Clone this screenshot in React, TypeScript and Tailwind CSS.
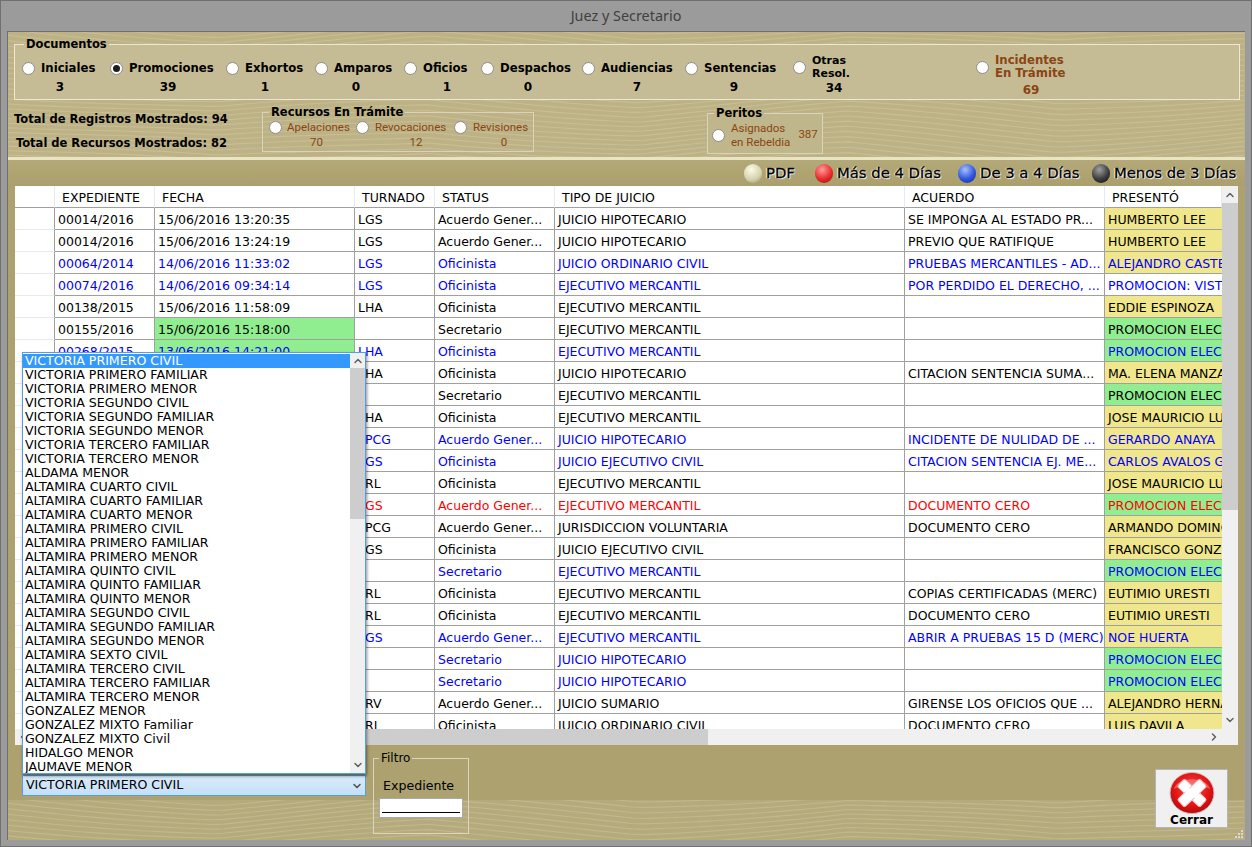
import { ChevronDown, ChevronLeft, ChevronRight, ChevronUp } from "lucide-react";

type Tone = "black" | "blue" | "red";

type GridRow = {
  exp: string;
  fecha: string;
  turnado: string;
  status: string;
  tipo: string;
  acuerdo: string;
  presento: string;
  tone: Tone;
  fechaVerde?: boolean;
  presentoBg?: "yellow" | "green" | "white";
};

const rows: GridRow[] = [
  { exp: "00014/2016", fecha: "15/06/2016 13:20:35", turnado: "LGS", status: "Acuerdo Gener...", tipo: "JUICIO HIPOTECARIO", acuerdo: "SE IMPONGA AL ESTADO PR...", presento: "HUMBERTO LEE", tone: "black" },
  { exp: "00014/2016", fecha: "15/06/2016 13:24:19", turnado: "LGS", status: "Acuerdo Gener...", tipo: "JUICIO HIPOTECARIO", acuerdo: "PREVIO QUE RATIFIQUE", presento: "HUMBERTO LEE", tone: "black" },
  { exp: "00064/2014", fecha: "14/06/2016 11:33:02", turnado: "LGS", status: "Oficinista", tipo: "JUICIO ORDINARIO CIVIL", acuerdo: "PRUEBAS MERCANTILES - AD...", presento: "ALEJANDRO CASTE", tone: "blue" },
  { exp: "00074/2016", fecha: "14/06/2016 09:34:14", turnado: "LGS", status: "Oficinista", tipo: "EJECUTIVO MERCANTIL", acuerdo: "POR PERDIDO EL DERECHO, ...", presento: "PROMOCION: VIST", tone: "blue", presentoBg: "white" },
  { exp: "00138/2015", fecha: "15/06/2016 11:58:09", turnado: "LHA", status: "Oficinista", tipo: "EJECUTIVO MERCANTIL", acuerdo: "", presento: "EDDIE ESPINOZA", tone: "black" },
  { exp: "00155/2016", fecha: "15/06/2016 15:18:00", turnado: "", status: "Secretario", tipo: "EJECUTIVO MERCANTIL", acuerdo: "", presento: "PROMOCION ELEC", tone: "black", fechaVerde: true, presentoBg: "green" },
  { exp: "00268/2015", fecha: "13/06/2016 14:21:00", turnado: "LHA", status: "Oficinista", tipo: "EJECUTIVO MERCANTIL", acuerdo: "", presento: "PROMOCION ELEC", tone: "blue", fechaVerde: true, presentoBg: "green" },
  { exp: "", fecha: "", turnado: "LHA", status: "Oficinista", tipo: "JUICIO HIPOTECARIO", acuerdo: "CITACION SENTENCIA SUMA...", presento: "MA. ELENA MANZA", tone: "black" },
  { exp: "", fecha: "", turnado: "", status: "Secretario", tipo: "EJECUTIVO MERCANTIL", acuerdo: "", presento: "PROMOCION ELEC", tone: "black", presentoBg: "green" },
  { exp: "", fecha: "", turnado: "LHA", status: "Oficinista", tipo: "EJECUTIVO MERCANTIL", acuerdo: "", presento: "JOSE MAURICIO LU", tone: "black" },
  { exp: "", fecha: "", turnado: "LPCG", status: "Acuerdo Gener...", tipo: "JUICIO HIPOTECARIO", acuerdo: "INCIDENTE DE NULIDAD DE ...", presento: "GERARDO ANAYA", tone: "blue" },
  { exp: "", fecha: "", turnado: "LGS", status: "Oficinista", tipo: "JUICIO EJECUTIVO CIVIL", acuerdo: "CITACION SENTENCIA EJ. ME...", presento: "CARLOS AVALOS G", tone: "blue" },
  { exp: "", fecha: "", turnado: "LRL", status: "Oficinista", tipo: "EJECUTIVO MERCANTIL", acuerdo: "", presento: "JOSE MAURICIO LU", tone: "black" },
  { exp: "", fecha: "", turnado: "LGS", status: "Acuerdo Gener...", tipo: "EJECUTIVO MERCANTIL", acuerdo: "DOCUMENTO CERO", presento: "PROMOCION ELEC", tone: "red", presentoBg: "green" },
  { exp: "", fecha: "", turnado: "LPCG", status: "Acuerdo Gener...", tipo: "JURISDICCION VOLUNTARIA", acuerdo: "DOCUMENTO CERO", presento: "ARMANDO DOMING", tone: "black" },
  { exp: "", fecha: "", turnado: "LGS", status: "Oficinista", tipo: "JUICIO EJECUTIVO CIVIL", acuerdo: "", presento: "FRANCISCO GONZ", tone: "black" },
  { exp: "", fecha: "", turnado: "", status: "Secretario", tipo: "EJECUTIVO MERCANTIL", acuerdo: "", presento: "PROMOCION ELEC", tone: "blue", presentoBg: "green" },
  { exp: "", fecha: "", turnado: "LRL", status: "Oficinista", tipo: "EJECUTIVO MERCANTIL", acuerdo: "COPIAS CERTIFICADAS (MERC)", presento: "EUTIMIO URESTI", tone: "black" },
  { exp: "", fecha: "", turnado: "LRL", status: "Oficinista", tipo: "EJECUTIVO MERCANTIL", acuerdo: "DOCUMENTO CERO", presento: "EUTIMIO URESTI", tone: "black" },
  { exp: "", fecha: "", turnado: "LGS", status: "Acuerdo Gener...", tipo: "EJECUTIVO MERCANTIL", acuerdo: "ABRIR A PRUEBAS 15 D (MERC)", presento: "NOE HUERTA", tone: "blue" },
  { exp: "", fecha: "", turnado: "", status: "Secretario", tipo: "JUICIO HIPOTECARIO", acuerdo: "", presento: "PROMOCION ELEC", tone: "blue", presentoBg: "green" },
  { exp: "", fecha: "", turnado: "", status: "Secretario", tipo: "JUICIO HIPOTECARIO", acuerdo: "", presento: "PROMOCION ELEC", tone: "blue", presentoBg: "green" },
  { exp: "", fecha: "", turnado: "LRV", status: "Acuerdo Gener...", tipo: "JUICIO SUMARIO", acuerdo: "GIRENSE LOS OFICIOS QUE ...", presento: "ALEJANDRO HERNA", tone: "black" },
  { exp: "", fecha: "", turnado: "LRL", status: "Oficinista", tipo: "JUICIO ORDINARIO CIVIL", acuerdo: "DOCUMENTO CERO", presento: "LUIS DAVILA", tone: "black" },
];

const juzgados = [
  "VICTORIA PRIMERO CIVIL",
  "VICTORIA PRIMERO FAMILIAR",
  "VICTORIA PRIMERO MENOR",
  "VICTORIA SEGUNDO CIVIL",
  "VICTORIA SEGUNDO FAMILIAR",
  "VICTORIA SEGUNDO MENOR",
  "VICTORIA TERCERO FAMILIAR",
  "VICTORIA TERCERO MENOR",
  "ALDAMA MENOR",
  "ALTAMIRA CUARTO CIVIL",
  "ALTAMIRA CUARTO FAMILIAR",
  "ALTAMIRA CUARTO MENOR",
  "ALTAMIRA PRIMERO CIVIL",
  "ALTAMIRA PRIMERO FAMILIAR",
  "ALTAMIRA PRIMERO MENOR",
  "ALTAMIRA QUINTO CIVIL",
  "ALTAMIRA QUINTO FAMILIAR",
  "ALTAMIRA QUINTO MENOR",
  "ALTAMIRA SEGUNDO CIVIL",
  "ALTAMIRA SEGUNDO FAMILIAR",
  "ALTAMIRA SEGUNDO MENOR",
  "ALTAMIRA SEXTO CIVIL",
  "ALTAMIRA TERCERO CIVIL",
  "ALTAMIRA TERCERO FAMILIAR",
  "ALTAMIRA TERCERO MENOR",
  "GONZALEZ MENOR",
  "GONZALEZ MIXTO Familiar",
  "GONZALEZ MIXTO Civil",
  "HIDALGO MENOR",
  "JAUMAVE MENOR",
];

const documentos = [
  { label: "Iniciales", count: "3", itemClass: "w-[88px]", countClass: "w-[76px]", selected: false },
  { label: "Promociones", count: "39", itemClass: "w-[116px]", countClass: "w-[116px]", selected: true },
  { label: "Exhortos", count: "1", itemClass: "w-[89px]", countClass: "w-[78px]", selected: false },
  { label: "Amparos", count: "0", itemClass: "w-[89px]", countClass: "w-[82px]", selected: false },
  { label: "Oficios", count: "1", itemClass: "w-[77px]", countClass: "w-[86px]", selected: false },
  { label: "Despachos", count: "0", itemClass: "w-[101px]", countClass: "w-[94px]", selected: false },
  { label: "Audiencias", count: "7", itemClass: "w-[103px]", countClass: "w-[110px]", selected: false },
  { label: "Sentencias", count: "9", itemClass: "w-[108px]", countClass: "w-[98px]", selected: false },
];

function toneClass(tone: Tone) {
  if (tone === "blue") return "text-[#0000ff]";
  if (tone === "red") return "text-[#ff0000]";
  return "text-[#000000]";
}

function presentoClass(bg: GridRow["presentoBg"]) {
  if (bg === "green") return "bg-[#90ee90]";
  if (bg === "white") return "bg-white";
  return "bg-[#f0e68c]";
}

// fondo ondulado del formulario
function Waves({ width, height }: { width: number; height: number }) {
  const lines: string[] = [];
  for (let y0 = -12; y0 < height + 16; y0 += 5) {
    let d = "";
    for (let x = 0; x <= width; x += 12) {
      const phase = ((x % 420) / 420) * 2;
      const tri = phase < 1 ? phase : 2 - phase;
      const y = y0 + tri * 14 + Math.sin(x / 95 + y0 / 40) * 4;
      d += `${x === 0 ? "M" : "L"}${x} ${y.toFixed(1)} `;
    }
    lines.push(d);
  }
  return (
    <svg className="absolute inset-0" width={width} height={height} aria-hidden="true">
      {lines.map((d, i) => (
        <path key={i} d={d} fill="none" stroke="#e6dfbd" strokeOpacity="0.26" strokeWidth="1.1" />
      ))}
    </svg>
  );
}

function Radio({ selected = false }: { selected?: boolean }) {
  return (
    <span className="flex h-[13px] w-[13px] shrink-0 items-center justify-center rounded-full border border-[#8d8d8d] bg-white">
      {selected && <span className="h-[7px] w-[7px] rounded-full bg-[#1c1c1c]" />}
    </span>
  );
}

function Ball({ colorClass }: { colorClass: string }) {
  return <span className={`h-[19px] w-[18px] shrink-0 rounded-full ${colorClass}`} />;
}

function Legend({ colorClass, text, className }: { colorClass: string; text: string; className: string }) {
  return (
    <div className={`flex items-center ${className}`}>
      <Ball colorClass={colorClass} />
      <span className="ml-[4px] whitespace-nowrap text-[14.8px] text-black [-webkit-text-stroke:0.3px_#000000] [text-shadow:1px_1px_1px_#ffffff,-1px_0_1px_#ffffff]">
        {text}
      </span>
    </div>
  );
}

function CloseIcon() {
  return (
    <svg width="48" height="44" viewBox="0 0 48 44" aria-hidden="true">
      <defs>
        <radialGradient id="cerrarRojo" cx="50%" cy="40%" r="62%">
          <stop offset="0%" stopColor="#f74a4a" />
          <stop offset="65%" stopColor="#e31414" />
          <stop offset="100%" stopColor="#b00a0a" />
        </radialGradient>
      </defs>
      <ellipse cx="24" cy="22" rx="23" ry="21.5" fill="url(#cerrarRojo)" stroke="#c9c0c0" />
      <path d="M5 18 C8 4 40 4 43 18 C34 12 14 12 5 18 Z" fill="#ffffff" fillOpacity="0.28" />
      <g fill="#ffffff" stroke="#f5b5b5" strokeWidth="1">
        <rect x="8" y="16.5" width="32" height="11" rx="2" transform="rotate(43 24 22)" />
        <rect x="8" y="16.5" width="32" height="11" rx="2" transform="rotate(-43 24 22)" />
      </g>
      <rect x="17" y="17" width="14" height="10" fill="#ffffff" />
    </svg>
  );
}

export default function App() {
  return (
    <div className="flex h-[847px] w-[1252px] flex-col overflow-hidden border border-[#707070] bg-[#9b9b9b] [font-family:'DejaVu_Sans',sans-serif]">
      <div className="flex h-[30px] shrink-0 items-center justify-center text-[14.4px] text-[#404040] [font-family:'Noto_Sans',sans-serif]">
        Juez y Secretario
      </div>

      <main className="relative ml-[6px] flex h-[809px] w-[1238px] flex-col border-l border-t border-[#6e6e6e] bg-[#ada26f]">
        {/* cabecera con documentos y recursos */}
        <section className="relative h-[125px] shrink-0 overflow-hidden bg-[#bdb286]">
          <Waves width={1238} height={125} />
          <fieldset className="relative ml-[6px] mt-[4px] h-[64px] w-[1226px] border border-[#ece8d3] bg-[#c5bc95] px-[7px]">
            <legend className="ml-[2px] px-[2px] text-[11.5px] font-bold leading-[16px] text-black">Documentos</legend>
            <div className="flex items-start pt-[8px]">
              {documentos.map((doc) => (
                <div key={doc.label} className={`flex flex-col ${doc.itemClass}`}>
                  <div className="flex h-[17px] items-center gap-[6px]">
                    <Radio selected={doc.selected} />
                    <span className="whitespace-nowrap text-[11.7px] font-bold text-black">{doc.label}</span>
                  </div>
                  <div className={`mt-[3px] text-center text-[12px] font-bold leading-[15px] text-black ${doc.countClass}`}>
                    {doc.count}
                  </div>
                </div>
              ))}
              <div className="flex w-[183px] flex-col">
                <div className="-mt-[6px] flex items-center gap-[6px]">
                  <Radio />
                  <span className="text-[11px] font-bold leading-[13px] text-black">
                    Otras
                    <br />
                    Resol.
                  </span>
                </div>
                <div className="mt-[1px] w-[82px] text-center text-[12px] font-bold leading-[15px] text-black">34</div>
              </div>
              <div className="flex flex-col">
                <div className="-mt-[6px] flex items-center gap-[6px]">
                  <Radio />
                  <span className="text-[11.7px] font-bold leading-[13px] text-[#8b4513]">
                    Incidentes
                    <br />
                    En Trámite
                  </span>
                </div>
                <div className="mt-[3px] w-[110px] text-center text-[12px] font-bold leading-[15px] text-[#8b4513]">69</div>
              </div>
            </div>
          </fieldset>

          <div className="relative flex">
            <div className="ml-[6px] mt-[7px] w-[213px] text-right text-[11.5px] font-bold leading-[24px] text-black">
              <p className="whitespace-nowrap">Total de Registros Mostrados: 94</p>
              <p className="whitespace-nowrap">Total de Recursos Mostrados: 82</p>
            </div>
            <fieldset className="ml-[35px] mt-[5px] h-[47px] w-[272px] border border-[#d9d4b8] px-[6px] [font-family:Roboto,sans-serif] text-[11.5px] leading-[15px] text-[#8b4513]">
              <legend className="ml-0 px-[2px] text-[11.5px] font-bold leading-[15px] text-black [font-family:'DejaVu_Sans',sans-serif]">
                Recursos En Trámite
              </legend>
              <div className="flex">
                <div className="w-[87px]">
                  <div className="flex items-center gap-[5px]">
                    <Radio />
                    <span>Apelaciones</span>
                  </div>
                  <div className="ml-[8px] text-center">70</div>
                </div>
                <div className="w-[98px]">
                  <div className="flex items-center gap-[6px]">
                    <Radio />
                    <span>Revocaciones</span>
                  </div>
                  <div className="ml-[22px] text-center">12</div>
                </div>
                <div className="w-[72px]">
                  <div className="flex items-center gap-[6px]">
                    <Radio />
                    <span>Revisiones</span>
                  </div>
                  <div className="ml-[28px] text-center">0</div>
                </div>
              </div>
            </fieldset>
            <fieldset className="ml-[173px] mt-[6px] h-[48px] w-[115px] border border-[#d9d4b8] bg-[#c0b68b] px-[4px] [font-family:Roboto,sans-serif] text-[11.5px] text-[#8b4513]">
              <legend className="ml-[2px] px-[2px] text-[11.5px] font-bold leading-[15px] text-black [font-family:'DejaVu_Sans',sans-serif]">
                Peritos
              </legend>
              <div className="flex items-center">
                <Radio />
                <span className="ml-[6px] whitespace-nowrap leading-[14px]">
                  Asignados
                  <br />
                  en Rebeldia
                </span>
                <span className="ml-[8px]">387</span>
              </div>
            </fieldset>
          </div>
        </section>

        <div className="h-[3px] shrink-0 bg-[#e9e4c4]" />

        {/* simbologia */}
        <div className="flex h-[26px] shrink-0 items-center bg-[linear-gradient(#b3a877,#ab9f6d)] pl-[736px]">
          <Legend colorClass="bg-[radial-gradient(circle_at_40%_30%,#fbfbe8,#d3d0a8_60%,#8f8c68)]" text="PDF" className="w-[71px]" />
          <Legend colorClass="bg-[radial-gradient(circle_at_40%_30%,#ff9c9c,#ea2a2a_55%,#8f1010)]" text="Más de 4 Días" className="w-[143px]" />
          <Legend colorClass="bg-[radial-gradient(circle_at_40%_30%,#a9c0ff,#2f55dd_55%,#142c8a)]" text="De 3 a 4 Días" className="w-[134px]" />
          <Legend colorClass="bg-[radial-gradient(circle_at_40%_30%,#a0a0a0,#3c3c3c_55%,#111111)]" text="Menos de 3 Días" className="w-[146px]" />
        </div>

        {/* grid de expedientes */}
        <div className="relative ml-[7px] h-[559px] w-[1223px] shrink-0 bg-[#f0f0f0]">
          <div className="h-[543px] w-[1207px] overflow-hidden bg-white">
            <table className="w-[1207px] table-fixed border-separate border-spacing-0 text-[12.5px] text-black">
              <colgroup>
                <col className="w-[40px]" />
                <col className="w-[100px]" />
                <col className="w-[200px]" />
                <col className="w-[80px]" />
                <col className="w-[120px]" />
                <col className="w-[350px]" />
                <col className="w-[200px]" />
                <col className="w-[117px]" />
              </colgroup>
              <thead>
                <tr>
                  {["", "EXPEDIENTE", "FECHA", "TURNADO", "STATUS", "TIPO DE JUICIO", "ACUERDO", "PRESENTÓ"].map((title, i) => (
                    <th
                      key={i}
                      className="h-[22px] overflow-hidden whitespace-nowrap border-b border-r border-b-[#a0a0a0] border-r-[#e4ebf5] bg-white px-[7px] pt-[2px] text-left font-normal leading-[18px]"
                    >
                      {title}
                    </th>
                  ))}
                </tr>
              </thead>
              <tbody>
                {rows.map((row, i) => {
                  const cell = `h-[22px] overflow-hidden whitespace-nowrap border-b border-r border-[#a0a0a0] px-[3px] pt-[2px] leading-[18px] ${toneClass(row.tone)}`;
                  return (
                    <tr key={i}>
                      <td className="h-[22px] border-b border-r border-b-[#e4ebf5] border-r-[#a0a0a0] bg-white" />
                      <td className={cell}>{row.exp}</td>
                      <td className={`${cell} ${row.fechaVerde ? "bg-[#90ee90]" : ""}`}>{row.fecha}</td>
                      <td className={cell}>{row.turnado}</td>
                      <td className={cell}>{row.status}</td>
                      <td className={cell}>{row.tipo}</td>
                      <td className={cell}>{row.acuerdo}</td>
                      <td className={`${cell} border-r-0 ${presentoClass(row.presentoBg)}`}>{row.presento}</td>
                    </tr>
                  );
                })}
              </tbody>
            </table>
          </div>

          {/* barra vertical */}
          <div className="absolute right-0 top-0 flex h-[543px] w-[16px] flex-col items-center bg-[#f0f0f0]">
            <ChevronUp size={12} strokeWidth={3} className="mt-[3px] text-[#606060]" />
            <div className="mt-[2px] h-[307px] w-full bg-[#cdcdcd]" />
            <ChevronDown size={12} strokeWidth={3} className="mt-auto mb-[3px] text-[#606060]" />
          </div>
          {/* barra horizontal */}
          <div className="flex h-[16px] w-[1207px] items-center">
            <ChevronLeft size={12} strokeWidth={3} className="ml-[2px] text-[#606060]" />
            <div className="ml-[4px] h-full w-[675px] bg-[#cdcdcd]" />
            <ChevronRight size={12} strokeWidth={3} className="ml-auto mr-[2px] text-[#606060]" />
          </div>
        </div>

        {/* pie con juzgado, filtro y cerrar */}
        <footer className="relative flex-1 overflow-hidden bg-[#ada26f]">
          <div className="absolute inset-x-0 bottom-0 h-[40px] overflow-hidden bg-[#b5aa7c]">
            <Waves width={1238} height={40} />
          </div>
          <div className="relative flex items-start">
            <div className="ml-[14px] mt-[30px] flex h-[21px] w-[344px] items-center justify-between border border-[#569de5] bg-[linear-gradient(#d9ebfb,#c4dff9)] pl-[3px] pr-[2px] text-[12.6px] text-black">
              VICTORIA PRIMERO CIVIL
              <ChevronDown size={12} strokeWidth={3} className="text-[#505050]" />
            </div>
            <fieldset className="ml-[7px] mt-[5px] h-[84px] w-[94px] border border-[#dad6bd] px-[5px]">
              <legend className="ml-0 px-[2px] text-[12px] leading-[16px] text-black">Filtro</legend>
              <div className="ml-[4px] mt-[12px] text-[12.6px] leading-[16px] text-black">Expediente</div>
              <div className="mt-[4px] flex h-[20px] w-[84px] items-end border border-[#a9a9a9] bg-white px-[2px] pb-[4px]">
                <div className="h-px w-full bg-black" />
              </div>
            </fieldset>
            <button className="ml-auto mr-[17px] mt-[24px] flex h-[59px] w-[73px] flex-col items-center border border-[#b4b4b4] bg-[#f0f0f0] pt-[2px] text-[12px] font-bold leading-[13px] text-black">
              <CloseIcon />
              Cerrar
            </button>
          </div>
          <div className="absolute bottom-[2px] right-[2px] grid grid-cols-3 gap-px">
            <span />
            <span />
            <span className="h-[2px] w-[2px] bg-[#d8d8d8]" />
            <span />
            <span className="h-[2px] w-[2px] bg-[#d8d8d8]" />
            <span className="h-[2px] w-[2px] bg-[#d8d8d8]" />
            <span className="h-[2px] w-[2px] bg-[#d8d8d8]" />
            <span className="h-[2px] w-[2px] bg-[#d8d8d8]" />
            <span className="h-[2px] w-[2px] bg-[#d8d8d8]" />
          </div>
        </footer>

        {/* lista desplegada del combo */}
        <div className="absolute left-[14px] top-[320px] flex h-[422px] w-[344px] border border-[#569de5] bg-white shadow-[1px_2px_3px_rgba(0,0,0,0.45)]">
          <ul className="flex-1 overflow-hidden pt-px text-[12.6px] leading-[14px] text-black">
            {juzgados.map((name, i) => (
              <li key={name} className={`h-[14px] whitespace-nowrap pl-[2px] ${i === 0 ? "bg-[#3399ff] text-white" : ""}`}>
                {name}
              </li>
            ))}
          </ul>
          <div className="flex w-[15px] flex-col items-center bg-[#f0f0f0]">
            <ChevronUp size={12} strokeWidth={3} className="mt-[2px] text-[#606060]" />
            <div className="mt-[1px] h-[151px] w-full bg-[#cdcdcd]" />
            <ChevronDown size={12} strokeWidth={3} className="mt-auto mb-[2px] text-[#606060]" />
          </div>
        </div>
      </main>
    </div>
  );
}
